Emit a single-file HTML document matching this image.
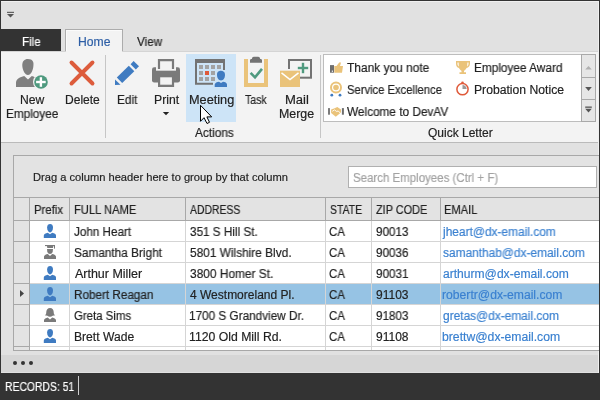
<!DOCTYPE html>
<html><head><meta charset="utf-8"><style>
html,body{margin:0;padding:0;}
body{width:600px;height:400px;position:relative;overflow:hidden;background:#e1e1e1;font-family:"Liberation Sans",sans-serif;}
.b{position:absolute;}
.t{position:absolute;will-change:transform;font-size:12px;line-height:14px;white-space:nowrap;transform-origin:0 0;}
svg{position:absolute;left:0;top:0;}
</style></head><body>
<div class="b" style="left:0;top:0;width:600px;height:1px;background:#333333"></div>
<div class="b" style="left:0;top:0;width:1px;height:400px;background:#333333"></div>
<div class="b" style="left:599px;top:0;width:1px;height:400px;background:#333333"></div>
<div class="b" style="left:1px;top:1px;width:598px;height:1px;background:#f0f0f0"></div>
<div class="b" style="left:598px;top:1px;width:1px;height:372px;background:#f0f0f0"></div>
<div class="b" style="left:1px;top:29px;width:60px;height:22px;background:#333333"></div>
<div class="b" style="left:65px;top:29px;width:58px;height:23px;background:#f3f3f3;box-sizing:border-box;border:1px solid #acacac;border-bottom:none;box-shadow:inset 1px 1px 0 #fbfbfb"></div>
<div class="b" style="left:1px;top:51px;width:597px;height:1px;background:#d4d4d4"></div>
<div class="b" style="left:66px;top:51px;width:56px;height:1px;background:#f3f3f3"></div>
<div class="b" style="left:1px;top:52px;width:597px;height:90px;background:#f3f3f3"></div>
<div class="b" style="left:1px;top:142px;width:597px;height:1px;background:#bababa"></div>
<div class="b" style="left:14px;top:156px;width:585px;height:41px;background:#e3e3e3"></div>
<div class="b" style="left:14px;top:198px;width:585px;height:22px;background:#e3e3e3"></div>
<div class="b" style="left:1px;top:355px;width:597px;height:17px;background:#d6d6d6"></div>
<div class="b" style="left:1px;top:373px;width:599px;height:27px;background:#333333"></div>
<svg width="600" height="400" viewBox="0 0 600 400">
<rect x="7" y="11.8" width="7" height="1.1" fill="#555" /><path d="M7 14 L14 14 L10.5 17.6 Z" fill="#555"/><rect x="105" y="55" width="1" height="83" fill="#c6c6c6" /><rect x="320" y="55" width="1" height="83" fill="#c6c6c6" /><rect x="186" y="54" width="50" height="68" fill="#cde4f7" /><path d="M22.3 66 C22.1 61 24.5 59 27.8 59 C30.5 59 32 59.8 32.8 61.2 C33.6 62.3 33.6 64 33.4 66 C33 70.5 31 75 28 75 C25 75 22.7 70.5 22.3 66 Z" fill="#7f7f7f"/><path d="M16 87 V82.5 C16.5 78.5 20 77 24.2 76 L28 79.5 L31.8 76 C34 76.5 36 77.5 37 79 V87 Z" fill="#7f7f7f"/><circle cx="41" cy="82" r="8" fill="#f3f3f3"/><circle cx="41" cy="82" r="6.8" fill="#4f9a7f"/><rect x="39.7" y="77.2" width="2.4" height="9.6" fill="#fff" /><rect x="36.1" y="80.8" width="9.6" height="2.4" fill="#fff" /><path d="M71.5 62.5 L92.5 83.5 M92.5 62.5 L71.5 83.5" stroke="#dd5c3c" stroke-width="3.9" stroke-linecap="round"/><polygon points="116.8,77.4 128.8,65.8 134.3,71.3 122.2,83.1" fill="#3f7bc1"/><polygon points="130.6,64.3 133.6,61.1 139,66.3 135.8,69.6" fill="#3f7bc1"/><polygon points="115,79.4 115,84.9 120.5,84.7" fill="#3f7bc1"/><rect x="152" y="67.2" width="28" height="15.3" rx="2.2" fill="#7a7a7a"/><rect x="156" y="57" width="20" height="13.7" fill="#f3f3f3" /><path d="M159 69 V60.1 H173 V69" fill="none" stroke="#7a7a7a" stroke-width="2.2"/><rect x="158" y="75.8" width="16.1" height="11.2" fill="#7a7a7a" /><rect x="160.2" y="77.3" width="11.7" height="7.4" fill="#f3f3f3" /><path d="M195 59 H225 V70 H223 V63 H197 V82.7 H213 V84.7 H195 Z" fill="#737373"/><rect x="199" y="65" width="4" height="4" fill="#a3a3a3" /><rect x="205" y="65" width="4" height="4" fill="#a3a3a3" /><rect x="211" y="65" width="4" height="4" fill="#a3a3a3" /><rect x="217" y="65" width="4" height="4" fill="#a3a3a3" /><rect x="199" y="71" width="4" height="4" fill="#a3a3a3" /><rect x="205" y="71" width="4" height="4" fill="#df5a3a" /><rect x="211" y="71" width="4" height="4" fill="#a3a3a3" /><rect x="199" y="77" width="4" height="4" fill="#a3a3a3" /><rect x="205" y="77" width="4" height="4" fill="#a3a3a3" /><rect x="211" y="77" width="4" height="4" fill="#a3a3a3" /><rect x="217" y="65" width="4" height="4" fill="#a3a3a3" /><path d="M217 74.5 C217 71.5 219 70.7 221 70.7 C223 70.7 225 71.8 225 74.5 C225 78 223.5 80.4 221 80.4 C218.5 80.4 217 78 217 74.5 Z" fill="#3f7bc1"/><path d="M214.7 87 L214.7 84.5 C215 82.8 217 82 219 81.7 L221 83 L223 81.7 C225 82 227 82.8 227 84.5 L227 87 Z" fill="#3f7bc1"/><path d="M244 59 H268 V87 H244 Z M248 59 V83 H264 V59 Z" fill="#eac37a" fill-rule="evenodd"/><path d="M250 62.7 V60.3 C250 59.5 250.8 59 251.8 59 L252.3 57.6 C252.6 57 253.2 56.7 254 56.7 H258 C258.8 56.7 259.4 57 259.7 57.6 L260.2 59 C261.2 59 262 59.5 262 60.3 V62.7 Z" fill="#737373"/><path d="M250.6 72.8 L255 77.3 L262 68.8" fill="none" stroke="#4f9a7f" stroke-width="2.6"/><rect x="289" y="60" width="22" height="17.7" fill="none" stroke="#737373" stroke-width="2"/><rect x="278" y="69" width="19" height="20" fill="#f3f3f3" /><rect x="296" y="63" width="13" height="10" fill="#f3f3f3" /><rect x="301.8" y="62.8" width="2.4" height="10.4" fill="#4f9a7f" /><rect x="297.8" y="66.8" width="10.4" height="2.4" fill="#4f9a7f" /><rect x="280" y="70.7" width="20" height="16.3" fill="#eac37a" /><path d="M281.5 72.8 L290 79.6 L298.5 72.8" fill="none" stroke="#fff" stroke-width="1.5"/><path d="M200.5 105.3 L200.5 121.3 L204 117.7 L207 123.5 L209.5 122.3 L206.9 116.9 L211.7 116.9 Z" fill="#fff" stroke="#000" stroke-width="1" stroke-linejoin="round"/><rect x="323.5" y="54.5" width="272" height="67" fill="#fff" stroke="#bdbdbd" stroke-width="1"/><rect x="581.5" y="54.5" width="14" height="67" fill="#e6e6e6" stroke="#a9a9a9" stroke-width="1"/><rect x="582" y="77" width="13" height="1" fill="#a9a9a9" /><rect x="582" y="99" width="13" height="1" fill="#a9a9a9" /><path d="M585.2 69.5 L591.8 69.5 L588.5 66 Z" fill="#b0b0b0"/><path d="M585.2 87 L591.8 87 L588.5 91 Z" fill="#555"/><rect x="585.2" y="106.5" width="6.6" height="1.3" fill="#555" /><path d="M585.2 108.8 L591.8 108.8 L588.5 112.5 Z" fill="#555"/><rect x="330" y="65.1" width="4" height="7.6" fill="#6e6e6e" /><rect x="331.8" y="70.6" width="1.2" height="1.2" fill="#fff" /><path d="M334.3 66 L336.5 66 L339 62.8 C339.8 61.8 341 62.2 340.8 63.5 L340 66 L343 66 L342 72.7 L334.3 72.7 Z" fill="#eac37a"/><circle cx="336" cy="87.5" r="5" fill="none" stroke="#eac37a" stroke-width="2"/><circle cx="336" cy="87.5" r="2.8" fill="#eac37a"/><circle cx="331.8" cy="95.2" r="1.4" fill="#3f7bc1"/><circle cx="340" cy="95.2" r="1.4" fill="#3f7bc1"/><rect x="328.1" y="108.1" width="1.8" height="6.6" fill="#6e6e6e" /><rect x="341.9" y="108.1" width="2" height="6.6" fill="#6e6e6e" /><path d="M331.1 109.6 L334 108.4 L337.3 107.1 L341 109.5 L341 112.6 L335.8 116.8 L331.1 113 Z" fill="#eac37a"/><path d="M332.3 111.3 L334.5 109.9 L336.8 111.6 L338.2 110.9 L340.6 113.4" fill="none" stroke="#fff" stroke-width="0.9"/><path d="M162.8 112 L169.2 112 L166 115.3 Z" fill="#222"/><path d="M456 61 H470 V63.5 C470 66 468.5 67.5 466.5 68 C466 69.5 464.5 70.5 464 70.8 V72.2 H466 V74 H459.5 V72.2 H461.5 V70.8 C461 70.5 459.5 69.5 459 68 C457 67.5 456 66 456 63.5 Z M457.5 62.5 V63.8 C457.5 65 458 66 458.8 66.5 L458.6 62.5 Z M468.5 62.5 V63.8 C468.5 65 468 66 467.2 66.5 L467.4 62.5 Z" fill="#eac37a" fill-rule="evenodd"/><circle cx="462.5" cy="89.2" r="5.6" fill="#fff" stroke="#df5a3a" stroke-width="1.5"/><circle cx="462.5" cy="82.8" r="1.3" fill="#df5a3a"/><path d="M462.5 85 V89 H466.7 C466.7 86.8 464.7 85 462.5 85 Z" fill="#9a9a9a"/><rect x="13" y="155" width="586" height="1" fill="#a8a8a8" /><rect x="13" y="155" width="1" height="196" fill="#a8a8a8" /><rect x="348.5" y="166.5" width="248" height="21" fill="#fff" stroke="#b0b0b0" stroke-width="1"/><rect x="13" y="197" width="586" height="1" fill="#a8a8a8" /><rect x="13" y="220" width="586" height="1" fill="#a8a8a8" /><rect x="14" y="221" width="15" height="129" fill="#e3e3e3" /><rect x="30" y="221" width="569" height="129" fill="#ffffff" /><rect x="30" y="284" width="569" height="20" fill="#96c3e4" /><rect x="14" y="241" width="15" height="1" fill="#a8a8a8" /><rect x="30" y="241" width="569" height="1" fill="#d5d5d5" /><rect x="14" y="262" width="15" height="1" fill="#a8a8a8" /><rect x="30" y="262" width="569" height="1" fill="#d5d5d5" /><rect x="14" y="283" width="15" height="1" fill="#a8a8a8" /><rect x="30" y="283" width="569" height="1" fill="#d5d5d5" /><rect x="14" y="304" width="15" height="1" fill="#a8a8a8" /><rect x="30" y="304" width="569" height="1" fill="#d5d5d5" /><rect x="14" y="325" width="15" height="1" fill="#a8a8a8" /><rect x="30" y="325" width="569" height="1" fill="#d5d5d5" /><rect x="14" y="346" width="15" height="1" fill="#a8a8a8" /><rect x="30" y="346" width="569" height="1" fill="#d5d5d5" /><rect x="13" y="350" width="586" height="1" fill="#a8a8a8" /><rect x="29" y="198" width="1" height="153" fill="#a8a8a8" /><rect x="69" y="198" width="1" height="22" fill="#a8a8a8" /><rect x="69" y="221" width="1" height="129" fill="#d5d5d5" /><rect x="185" y="198" width="1" height="22" fill="#a8a8a8" /><rect x="185" y="221" width="1" height="129" fill="#d5d5d5" /><rect x="325" y="198" width="1" height="22" fill="#a8a8a8" /><rect x="325" y="221" width="1" height="129" fill="#d5d5d5" /><rect x="371" y="198" width="1" height="22" fill="#a8a8a8" /><rect x="371" y="221" width="1" height="129" fill="#d5d5d5" /><rect x="440" y="198" width="1" height="22" fill="#a8a8a8" /><rect x="440" y="221" width="1" height="129" fill="#d5d5d5" /><path d="M20 290 L24 293.5 L20 297 Z" fill="#444"/><path d="M47.1 227.6 C47.1 225 48.4 224 50.1 224 C51.8 224 53 225 53 227.6 C53 230.3 51.6 232.5 50 232.5 C48.5 232.5 47.1 230.3 47.1 227.6 Z" transform="translate(0,0)" fill="#3f7bc1"/><path d="M43.8 238 V235.5 C44 234 45.5 233.2 47.8 232.7 L50 234.2 L52.2 232.7 C54.5 233.2 56 234 56 235.5 V238 Z" transform="translate(0,0)" fill="#3f7bc1"/><g transform="translate(0,21)" fill="#7a7a7a"><rect x="45" y="224" width="10" height="1.1"/><path d="M47 225 H53.3 L53 226.9 H47.3 Z"/><rect x="54" y="225" width="1" height="2.6"/><path d="M47 228 H53 L52.7 230.8 C52.2 232.2 51.2 233 50 233 C48.8 233 47.8 232.2 47.3 230.8 Z"/><path d="M44 238 V235.6 C44.2 234.3 45.6 233.6 47.8 233.1 L50 235 L52.2 233.1 C54.4 233.6 55.8 234.3 56 235.6 V238 Z"/></g><path d="M47.1 227.6 C47.1 225 48.4 224 50.1 224 C51.8 224 53 225 53 227.6 C53 230.3 51.6 232.5 50 232.5 C48.5 232.5 47.1 230.3 47.1 227.6 Z" transform="translate(0,42)" fill="#3f7bc1"/><path d="M43.8 238 V235.5 C44 234 45.5 233.2 47.8 232.7 L50 234.2 L52.2 232.7 C54.5 233.2 56 234 56 235.5 V238 Z" transform="translate(0,42)" fill="#3f7bc1"/><path d="M47.1 227.6 C47.1 225 48.4 224 50.1 224 C51.8 224 53 225 53 227.6 C53 230.3 51.6 232.5 50 232.5 C48.5 232.5 47.1 230.3 47.1 227.6 Z" transform="translate(0,63)" fill="#3f7bc1"/><path d="M43.8 238 V235.5 C44 234 45.5 233.2 47.8 232.7 L50 234.2 L52.2 232.7 C54.5 233.2 56 234 56 235.5 V238 Z" transform="translate(0,63)" fill="#3f7bc1"/><g transform="translate(0,84)" fill="#7a7a7a"><path d="M46.2 229 C46.2 225.5 47.8 224 50 224 C52.4 224 53.8 225.5 53.8 229 L54 230.2 L55.2 231.3 L52.6 231.7 C51.9 232.4 51 232.8 50 232.8 C49 232.8 48.1 232.4 47.4 231.7 L44.8 231.3 L46 230.2 Z"/><path d="M44 238 V236 C44.3 234.7 45.8 233.9 47.7 233.4 L50 235.6 L52.3 233.4 C54.2 233.9 55.7 234.7 56 236 V238 Z"/></g><path d="M47.1 227.6 C47.1 225 48.4 224 50.1 224 C51.8 224 53 225 53 227.6 C53 230.3 51.6 232.5 50 232.5 C48.5 232.5 47.1 230.3 47.1 227.6 Z" transform="translate(0,105)" fill="#3f7bc1"/><path d="M43.8 238 V235.5 C44 234 45.5 233.2 47.8 232.7 L50 234.2 L52.2 232.7 C54.5 233.2 56 234 56 235.5 V238 Z" transform="translate(0,105)" fill="#3f7bc1"/><circle cx="15" cy="363" r="2" fill="#333"/><circle cx="23" cy="363" r="2" fill="#333"/><circle cx="31" cy="363" r="2" fill="#333"/><rect x="78" y="376" width="1" height="19" fill="#cfcfcf" />
</svg>
<div class="t" style="left:21.63px;top:35.00px;color:#ffffff;-webkit-text-stroke:0.18px #ffffff;transform:scaleX(0.9631);font-size:12px">File</div><div class="t" style="left:77.84px;top:35.00px;color:#2e5fa6;-webkit-text-stroke:0.18px #2e5fa6;transform:scaleX(1.0151);font-size:12px">Home</div><div class="t" style="left:137.10px;top:35.00px;color:#222222;-webkit-text-stroke:0.18px #222222;transform:scaleX(0.9719);font-size:12px">View</div><div class="t" style="left:19.69px;top:93.00px;color:#222222;-webkit-text-stroke:0.18px #222222;transform:scaleX(1.0112);font-size:12px">New</div><div class="t" style="left:5.72px;top:107.00px;color:#222222;-webkit-text-stroke:0.18px #222222;transform:scaleX(0.9810);font-size:12px">Employee</div><div class="t" style="left:64.70px;top:93.00px;color:#222222;-webkit-text-stroke:0.18px #222222;transform:scaleX(1.0026);font-size:12px">Delete</div><div class="t" style="left:116.72px;top:93.00px;color:#222222;-webkit-text-stroke:0.18px #222222;transform:scaleX(0.9826);font-size:12px">Edit</div><div class="t" style="left:153.79px;top:93.00px;color:#222222;-webkit-text-stroke:0.18px #222222;transform:scaleX(1.0152);font-size:12px">Print</div><div class="t" style="left:188.55px;top:93.00px;color:#222222;-webkit-text-stroke:0.18px #222222;transform:scaleX(1.0605);font-size:12px">Meeting</div><div class="t" style="left:245.33px;top:93.00px;color:#222222;-webkit-text-stroke:0.18px #222222;transform:scaleX(0.8749);font-size:12px">Task</div><div class="t" style="left:284.52px;top:93.00px;color:#222222;-webkit-text-stroke:0.18px #222222;transform:scaleX(1.0867);font-size:12px">Mail</div><div class="t" style="left:279.07px;top:107.00px;color:#222222;-webkit-text-stroke:0.18px #222222;transform:scaleX(1.0325);font-size:12px">Merge</div><div class="t" style="left:194.60px;top:126.00px;color:#222222;-webkit-text-stroke:0.18px #222222;transform:scaleX(0.9858);font-size:12px">Actions</div><div class="t" style="left:427.50px;top:126.00px;color:#222222;-webkit-text-stroke:0.18px #222222;transform:scaleX(1.0000);font-size:12px">Quick Letter</div><div class="t" style="left:347.00px;top:61.00px;color:#222222;-webkit-text-stroke:0.18px #222222;transform:scaleX(0.9945);font-size:12px">Thank you note</div><div class="t" style="left:346.73px;top:83.00px;color:#222222;-webkit-text-stroke:0.18px #222222;transform:scaleX(0.9362);font-size:12px">Service Excellence</div><div class="t" style="left:347.00px;top:105.00px;color:#222222;-webkit-text-stroke:0.18px #222222;transform:scaleX(0.9833);font-size:12px">Welcome to DevAV</div><div class="t" style="left:474.01px;top:61.00px;color:#222222;-webkit-text-stroke:0.18px #222222;transform:scaleX(0.9840);font-size:12px">Employee Award</div><div class="t" style="left:473.99px;top:83.00px;color:#222222;-webkit-text-stroke:0.18px #222222;transform:scaleX(1.0144);font-size:12px">Probation Notice</div><div class="t" style="left:32.57px;top:170.00px;color:#222222;-webkit-text-stroke:0.18px #222222;transform:scaleX(1.0116);font-size:11px">Drag a column header here to group by that column</div><div class="t" style="left:352.82px;top:171.00px;color:#a2a2a2;-webkit-text-stroke:0.18px #a2a2a2;transform:scaleX(0.9567);font-size:12px">Search Employees (Ctrl + F)</div><div class="t" style="left:33.65px;top:203.00px;color:#222222;-webkit-text-stroke:0.18px #222222;transform:scaleX(0.9436);font-size:12px">Prefix</div><div class="t" style="left:73.66px;top:203.00px;color:#222222;-webkit-text-stroke:0.18px #222222;transform:scaleX(0.9296);font-size:12px">FULL NAME</div><div class="t" style="left:190.10px;top:203.00px;color:#222222;-webkit-text-stroke:0.18px #222222;transform:scaleX(0.8677);font-size:12px">ADDRESS</div><div class="t" style="left:329.67px;top:203.00px;color:#222222;-webkit-text-stroke:0.18px #222222;transform:scaleX(0.8694);font-size:12px">STATE</div><div class="t" style="left:375.73px;top:203.00px;color:#222222;-webkit-text-stroke:0.18px #222222;transform:scaleX(0.9075);font-size:12px">ZIP CODE</div><div class="t" style="left:444.47px;top:203.00px;color:#222222;-webkit-text-stroke:0.18px #222222;transform:scaleX(0.9269);font-size:12px">EMAIL</div><div class="t" style="left:5.02px;top:380.00px;color:#ffffff;-webkit-text-stroke:0.18px #ffffff;transform:scaleX(0.8644);font-size:12px">RECORDS: 51</div><div class="t" style="left:74.40px;top:225.00px;color:#222222;-webkit-text-stroke:0.18px #222222;transform:scaleX(0.9733);font-size:12px">John Heart</div><div class="t" style="left:189.61px;top:225.00px;color:#222222;-webkit-text-stroke:0.18px #222222;transform:scaleX(0.9760);font-size:12px">351 S Hill St.</div><div class="t" style="left:329.43px;top:225.00px;color:#222222;-webkit-text-stroke:0.18px #222222;transform:scaleX(0.9523);font-size:12px">CA</div><div class="t" style="left:375.51px;top:225.00px;color:#222222;-webkit-text-stroke:0.18px #222222;transform:scaleX(0.9724);font-size:12px">90013</div><div class="t" style="left:443.30px;top:225.00px;color:#3a80d0;-webkit-text-stroke:0.18px #3a80d0;transform:scaleX(0.9933);font-size:12px">jheart@dx-email.com</div><div class="t" style="left:74.01px;top:246.00px;color:#222222;-webkit-text-stroke:0.18px #222222;transform:scaleX(0.9837);font-size:12px">Samantha Bright</div><div class="t" style="left:189.60px;top:246.00px;color:#222222;-webkit-text-stroke:0.18px #222222;transform:scaleX(0.9884);font-size:12px">5801 Wilshire Blvd.</div><div class="t" style="left:329.43px;top:246.00px;color:#222222;-webkit-text-stroke:0.18px #222222;transform:scaleX(0.9523);font-size:12px">CA</div><div class="t" style="left:375.51px;top:246.00px;color:#222222;-webkit-text-stroke:0.18px #222222;transform:scaleX(0.9724);font-size:12px">90036</div><div class="t" style="left:442.70px;top:246.00px;color:#3a80d0;-webkit-text-stroke:0.18px #3a80d0;transform:scaleX(0.9915);font-size:12px">samanthab@dx-email.com</div><div class="t" style="left:74.50px;top:267.00px;color:#222222;-webkit-text-stroke:0.18px #222222;transform:scaleX(1.0391);font-size:12px">Arthur Miller</div><div class="t" style="left:189.60px;top:267.00px;color:#222222;-webkit-text-stroke:0.18px #222222;transform:scaleX(0.9927);font-size:12px">3800 Homer St.</div><div class="t" style="left:329.43px;top:267.00px;color:#222222;-webkit-text-stroke:0.18px #222222;transform:scaleX(0.9523);font-size:12px">CA</div><div class="t" style="left:375.51px;top:267.00px;color:#222222;-webkit-text-stroke:0.18px #222222;transform:scaleX(0.9754);font-size:12px">90031</div><div class="t" style="left:442.50px;top:267.00px;color:#3a80d0;-webkit-text-stroke:0.18px #3a80d0;transform:scaleX(1.0066);font-size:12px">arthurm@dx-email.com</div><div class="t" style="left:73.62px;top:288.00px;color:#222222;-webkit-text-stroke:0.18px #222222;transform:scaleX(0.9760);font-size:12px">Robert Reagan</div><div class="t" style="left:189.80px;top:288.00px;color:#222222;-webkit-text-stroke:0.18px #222222;transform:scaleX(0.9995);font-size:12px">4 Westmoreland Pl.</div><div class="t" style="left:329.43px;top:288.00px;color:#222222;-webkit-text-stroke:0.18px #222222;transform:scaleX(0.9523);font-size:12px">CA</div><div class="t" style="left:375.50px;top:288.00px;color:#222222;-webkit-text-stroke:0.18px #222222;transform:scaleX(0.9999);font-size:12px">91103</div><div class="t" style="left:442.29px;top:288.00px;color:#3a80d0;-webkit-text-stroke:0.18px #3a80d0;transform:scaleX(1.0129);font-size:12px">robertr@dx-email.com</div><div class="t" style="left:73.93px;top:309.00px;color:#222222;-webkit-text-stroke:0.18px #222222;transform:scaleX(0.9524);font-size:12px">Greta Sims</div><div class="t" style="left:189.12px;top:309.00px;color:#222222;-webkit-text-stroke:0.18px #222222;transform:scaleX(0.9796);font-size:12px">1700 S Grandview Dr.</div><div class="t" style="left:329.43px;top:309.00px;color:#222222;-webkit-text-stroke:0.18px #222222;transform:scaleX(0.9523);font-size:12px">CA</div><div class="t" style="left:375.51px;top:309.00px;color:#222222;-webkit-text-stroke:0.18px #222222;transform:scaleX(0.9724);font-size:12px">91803</div><div class="t" style="left:442.50px;top:309.00px;color:#3a80d0;-webkit-text-stroke:0.18px #3a80d0;transform:scaleX(0.9915);font-size:12px">gretas@dx-email.com</div><div class="t" style="left:73.59px;top:330.00px;color:#222222;-webkit-text-stroke:0.18px #222222;transform:scaleX(1.0102);font-size:12px">Brett Wade</div><div class="t" style="left:189.08px;top:330.00px;color:#222222;-webkit-text-stroke:0.18px #222222;transform:scaleX(1.0200);font-size:12px">1120 Old Mill Rd.</div><div class="t" style="left:329.43px;top:330.00px;color:#222222;-webkit-text-stroke:0.18px #222222;transform:scaleX(0.9523);font-size:12px">CA</div><div class="t" style="left:375.50px;top:330.00px;color:#222222;-webkit-text-stroke:0.18px #222222;transform:scaleX(0.9999);font-size:12px">91108</div><div class="t" style="left:442.29px;top:330.00px;color:#3a80d0;-webkit-text-stroke:0.18px #3a80d0;transform:scaleX(1.0164);font-size:12px">brettw@dx-email.com</div>
</body></html>
